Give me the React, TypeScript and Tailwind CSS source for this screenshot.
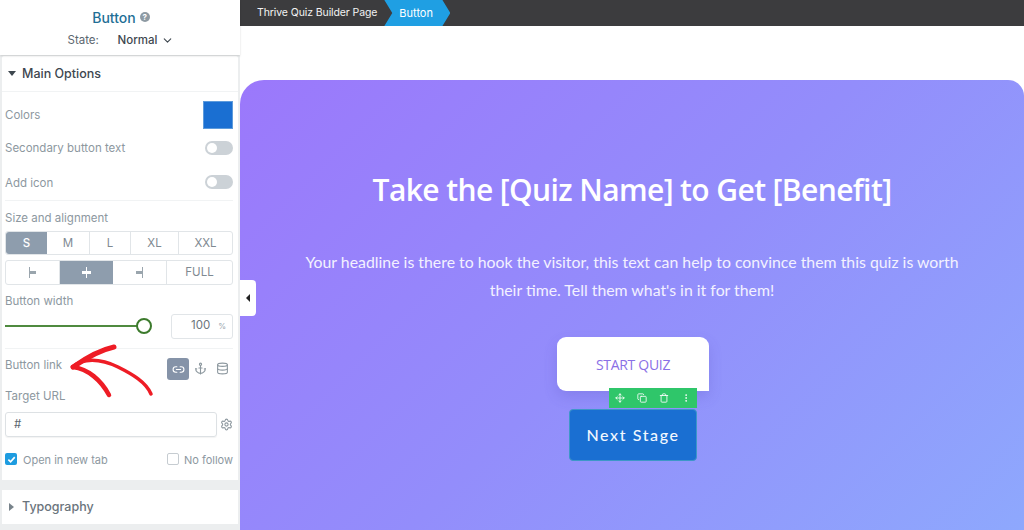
import React from "react";
import { Anchor, ChevronDown, Copy, Database, Link2, Move, MoreVertical, Settings, Trash } from "lucide-react";

const panelFont = "font-['Inter','Liberation_Sans',sans-serif]";

// little grey switch used in the options
const Toggle = () => (
  <div className="w-7 h-[14px] rounded-full bg-[#ccd2d7] flex items-center pl-[2px]">
    <div className="w-[10px] h-[10px] rounded-full bg-white" />
  </div>
);

const Divider = () => <div className="h-px bg-[#f1f3f4]" />;

const Sidebar = () => (
  <div className={`w-[240px] h-full shrink-0 bg-[#eceeef] flex flex-col ${panelFont}`}>
    {/* Header */}
    <div className="h-[55px] bg-white shadow-[0_1px_2px_rgba(0,0,0,0.15)] flex flex-col items-center pt-[9px] z-10">
      <div className="flex items-center gap-1 h-4 ml-[2px]">
        <span className="text-[14px] font-medium text-[#1f6f96]">Button</span>
        <span className="w-[10px] h-[10px] rounded-full bg-[#8e9aa3] text-white text-[8px] leading-[10px] text-center font-bold">?</span>
      </div>
      <div className="flex items-center mt-[7px] text-[11.5px] ml-[2px]">
        <span className="text-[#5c6770] w-[50px]">State:</span>
        <span className="font-medium text-[#3e474f]">Normal</span>
        <ChevronDown size={13} className="text-[#3e474f] ml-[4px]" />
      </div>
    </div>

    {/* Main options card */}
    <div className="h-[424px] ml-[2px] mr-[2px] mt-[1px] bg-white rounded-t-[2px] flex flex-col shrink-0">
      <div className="h-[35px] flex items-center pl-[6px] shrink-0">
        <span className="w-0 h-0 border-l-[4px] border-r-[4px] border-t-[5px] border-l-transparent border-r-transparent border-t-[#3e474f]" />
        <span className="ml-[6px] pt-[2px] text-[12.5px] font-medium text-[#3e474f]">Main Options</span>
      </div>
      <Divider />
      <div className="flex-1 pl-[3px] pr-[5px] text-[11.5px] text-[#8d989f] flex flex-col">
        <div className="h-[28px] mt-[9px] flex items-center justify-between">
          <span className="pt-[2px]">Colors</span>
          <div className="w-[30px] h-[28px] bg-[#1a6fd2] border border-[#5d9bdc]" />
        </div>
        <div className="h-[14px] mt-[12px] flex items-center justify-between">
          <span className="pt-[2px]">Secondary button text</span>
          <Toggle />
        </div>
        <div className="h-[14px] mt-[20px] flex items-center justify-between">
          <span className="pt-[3px]">Add icon</span>
          <Toggle />
        </div>
        <div className="h-px bg-[#f1f3f4] mt-[11px]" />
        <div className="mt-[10px] h-[14px] leading-[14px]">Size and alignment</div>
        <div className="mt-[6px] h-[24px] flex border border-[#e1e5e8] rounded-[3px] text-center leading-[22px] text-[#7f8a92]">
          <div className="w-[41px] bg-[#8e9dad] text-white font-medium rounded-l-[3px]">S</div>
          <div className="w-[43px] border-r border-[#e1e5e8]">M</div>
          <div className="w-[41px] border-r border-[#e1e5e8]">L</div>
          <div className="w-[48px] border-r border-[#e1e5e8]">XL</div>
          <div className="flex-1">XXL</div>
        </div>
        <div className="mt-[5px] h-[25px] flex border border-[#e1e5e8] rounded-[3px] text-[#7f8a92]">
          <div className="w-[54px] border-r border-[#e1e5e8] flex items-center justify-center">
            <span className="w-px h-[11px] bg-[#9aa5ad]" />
            <span className="w-[6px] h-[3px] bg-[#9aa5ad]" />
          </div>
          <div className="w-[53px] bg-[#8e9dad] flex items-center justify-center relative">
            <span className="w-[9px] h-[3px] bg-white" />
            <span className="absolute left-[26px] top-[6px] w-px h-[11px] bg-white" />
          </div>
          <div className="w-[54px] border-r border-[#e1e5e8] flex items-center justify-center">
            <span className="w-[6px] h-[3px] bg-[#9aa5ad]" />
            <span className="w-px h-[11px] bg-[#9aa5ad]" />
          </div>
          <div className="flex-1 text-center leading-[23px]">FULL</div>
        </div>
        <div className="mt-[9px] h-[14px] leading-[14px]">Button width</div>
        <div className="mt-[6px] flex items-center h-[24px]">
          <div className="w-[133px] h-[2px] bg-[#4f8a3f]" />
          <div className="w-[16px] h-[16px] rounded-full border-2 border-[#3c7a2c] bg-white -ml-[1px]" />
          <div className="ml-[19px] w-[62px] h-[25px] border border-[#e1e5e8] rounded-[3px] flex items-center justify-end pr-[6px] gap-[8px] text-[#6b757c]">
            <span>100</span>
            <span className="text-[8px] text-[#9aa5ad]">%</span>
          </div>
        </div>
        <div className="h-px bg-[#f1f3f4] mt-[10px]" />
        <div className="mt-[9px] h-[22px] flex items-center justify-between">
          <span className="-mt-[6px]">Button link</span>
          <div className="flex items-center pr-[4px]">
            <div className="w-[22px] h-[22px] bg-[#8593a8] rounded-[3px] flex items-center justify-center">
              <Link2 size={13} className="text-white" />
            </div>
            <Anchor size={13} className="text-[#8d989f] -mt-[2px] ml-[5px]" />
            <Database size={13} className="text-[#8d989f] ml-[9px] -mt-[2px]" />
          </div>
        </div>
        <div className="mt-[9px] h-[14px] leading-[14px]">Target URL</div>
        <div className="mt-[9px] flex items-center justify-between">
          <div className="w-[212px] h-[25px] border border-[#dde1e4] rounded-[3px] pl-[8px] leading-[23px] text-[#5c6770] shadow-[0_1px_1px_rgba(0,0,0,0.05)]">#</div>
          <Settings size={13} className="text-[#8d989f]" />
        </div>
        <div className="mt-[15px] flex items-center justify-between h-[14px] text-[11px]">
          <div className="flex items-center">
            <span className="w-3 h-3 rounded-[2px] bg-[#1e9ce0] text-white flex items-center justify-center">
              <svg width="9" height="9" viewBox="0 0 10 10" fill="none" stroke="currentColor" strokeWidth="1.8"><path d="M1.5 5.2 4 7.6 8.6 2.4" /></svg>
            </span>
            <span className="ml-[6px] pt-[2px]">Open in new tab</span>
          </div>
          <div className="flex items-center">
            <span className="w-3 h-3 rounded-[2px] border border-[#c6ccd1] bg-white" />
            <span className="ml-[5px] pt-[2px]">No follow</span>
          </div>
        </div>
      </div>
    </div>

    {/* Typography card */}
    <div className="mt-[10px] h-[34px] mx-[2px] bg-white flex items-center pl-[7px]">
      <span className="w-0 h-0 border-t-[4px] border-b-[4px] border-l-[5px] border-t-transparent border-b-transparent border-l-[#78838b]" />
      <span className="ml-[8px] text-[12.5px] font-medium text-[#6a747c]">Typography</span>
    </div>
  </div>
);

const RedArrow = () => (
  <svg className="absolute left-[60px] top-[335px] z-20" width="105" height="70" viewBox="60 335 105 70" fill="none" stroke="#ee1c25" strokeLinecap="round" strokeLinejoin="round">
    <path d="M114 347C100 350 86 358 73 367" strokeWidth="5" />
    <path d="M73 367C82 358 100 358 118 367C132 374 146 382 151 394" strokeWidth="3.5" />
    <path d="M73 367C88 369 101 380 109 395" strokeWidth="4.5" />
  </svg>
);

const QuizCard = () => (
  <div className="flex-1 mt-[54px] rounded-tl-[24px] rounded-tr-[16px] bg-[linear-gradient(135deg,#9b78fb_0%,#938dfb_50%,#8ea8fd_100%)] flex flex-col items-center text-white">
    <h1 className="mt-[92px] text-[30px] leading-9 font-semibold font-['Open_Sans','Liberation_Sans',sans-serif] tracking-[-0.6px]">
      Take the [Quiz Name] to Get [Benefit]
    </h1>
    <p className="mt-[40px] w-[670px] text-center text-[15.85px] leading-[28px] font-['Lato','Liberation_Sans',sans-serif] text-[#f3f1ff]">
      Your headline is there to hook the visitor, this text can help to convince them this quiz is worth their time. Tell them what's in it for them!
    </p>
    <div className="mt-[33px] ml-[2px] w-[152px] h-[54px] bg-white rounded-t-[9px] rounded-bl-[9px] flex items-center justify-center shadow-[0_6px_14px_rgba(80,70,180,0.2)] text-[14px] font-medium text-[#8a70e6] font-['Open_Sans','Liberation_Sans',sans-serif] tracking-[-0.3px]">
      START QUIZ
    </div>
    <div className="relative mt-[18px] ml-[2px] w-[128px] h-[52px] bg-[#1a6fd2] border border-[#3d97c8] rounded-[4px] flex items-center justify-center text-[16px] font-medium tracking-[1.6px] text-[#f2f8ff] font-['Lato','Liberation_Sans',sans-serif]">
      Next Stage
      <div className="absolute right-[-1px] top-[-22px] w-[88px] h-[20px] bg-[#2fc66a] flex items-center text-white">
        <div className="w-[22px] flex justify-center"><Move size={10} /></div>
        <div className="w-[22px] flex justify-center"><Copy size={10} /></div>
        <div className="w-[22px] flex justify-center"><Trash size={10} /></div>
        <div className="w-[22px] flex justify-center"><MoreVertical size={10} /></div>
      </div>
    </div>
  </div>
);

const App: React.FC = () => {
  return (
    <div className="relative flex w-[1024px] h-[530px] overflow-hidden bg-white">
      <Sidebar />
      <div className="flex-1 flex flex-col">
        {/* Breadcrumb */}
        <div className={`h-[26px] bg-[#3c3c3e] flex items-center shrink-0 text-[10.5px] text-white ${panelFont}`}>
          <span className="ml-[17px] text-[#f2f2f2] tracking-[-0.1px]">Thrive Quiz Builder Page</span>
          <div className="ml-[7px] w-[66px] h-[26px] bg-[#1f9fe3] [clip-path:polygon(0_0,88%_0,100%_50%,88%_100%,0_100%,12%_50%)] flex items-center pl-[15px] text-[11px]">
            Button
          </div>
        </div>
        <QuizCard />
      </div>
      {/* Collapse handle */}
      <div className="absolute left-[240px] top-[280px] w-4 h-[36px] bg-white rounded-r-[4px] flex items-center justify-center">
        <span className="w-0 h-0 border-t-[4px] border-b-[4px] border-r-[4px] border-t-transparent border-b-transparent border-r-[#222]" />
      </div>
      <RedArrow />
    </div>
  );
};

export default App;
